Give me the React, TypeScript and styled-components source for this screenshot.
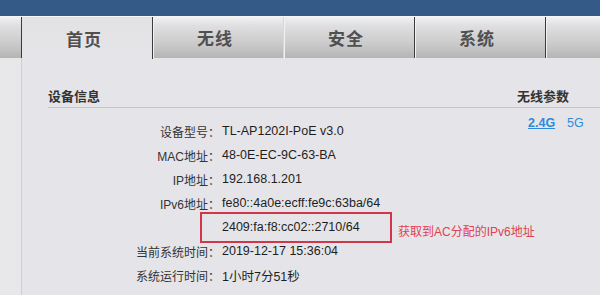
import styled, { createGlobalStyle, css } from 'styled-components';

const GlobalStyle = createGlobalStyle`
    html, body {
        margin: 0;
        padding: 0;
        background: #e5e5e9;
        font-family: "Liberation Sans", "Noto Sans CJK SC", sans-serif;
    }
`;

const Page = styled.div`
    width: 600px;
    height: 295px;
    overflow: hidden;
    background: #e5e5e9;
`;

const TopBar = styled.div`
    height: 16px;
    background: #345b88;
`;

const TabBar = styled.div`
    display: flex;
    height: 41px;
    background: linear-gradient(#eff1f3 0%, #e0e0e2 20%, #c8c8c8 70%, #b4b4b4 100%);
    border-top: 1px solid #f4f6f8;
`;

const TabLead = styled.div`
    width: 21px;
    flex: none;
    border-right: 1px solid #3a3a3a;
`;

const Tab = styled.div<{ active?: boolean; edge?: boolean }>`
    width: 131px;
    flex: none;
    display: flex;
    align-items: center;
    justify-content: center;
    padding-right: 6px;
    box-sizing: border-box;
    font-size: 17px;
    font-weight: bold;
    color: #505050;
    letter-spacing: 1px;
    border-right: 1px solid ${({ edge }) => (edge ? '#3a3a3a' : '#d6d6d6')};
    box-shadow: inset 1px 0 0 #f2f2f2;

    ${({ active }) => active && css`
        background: linear-gradient(#e2e2e4, #e5e5e9);
        height: 42px;
        box-shadow: none;
    `}
`;

const Main = styled.div`
    display: flex;
    height: 238px;
`;

const Gutter = styled.div`
    width: 21px;
    flex: none;
    background: #e8e8eb;
    border-right: 1px solid #cfcfd3;
`;

const Content = styled.div`
    display: flex;
    padding-left: 26px;
    flex: 1;
`;

const Section = styled.div<{ width?: number }>`
    position: relative;
    flex: ${({ width }) => (width ? 'none' : '1')};
    width: ${({ width }) => (width ? `${width}px` : 'auto')};
`;

const SectionTitle = styled.div<{ indent?: number }>`
    margin-top: 29px;
    height: 20px;
    line-height: 20px;
    padding-left: ${({ indent }) => indent ?? 0}px;
    font-size: 13px;
    font-weight: bold;
    color: #333;
    border-bottom: 1px solid #c4c4c8;
`;

const Rows = styled.div`
    margin-top: 11px;
`;

const Row = styled.div`
    position: relative;
    display: flex;
    height: 24px;
    align-items: center;
    font-size: 12px;
`;

const Label = styled.span`
    width: 172px;
    flex: none;
    text-align: right;
    color: #333;
`;

const Value = styled.span`
    padding-left: 2px;
    font-size: 12.5px;
    color: #1e1e1e;
`;

const Highlight = styled.div`
    position: absolute;
    left: 152px;
    top: -3px;
    width: 188px;
    height: 27px;
    border: 2px solid #d2364b;
`;

const Note = styled.span`
    position: absolute;
    left: 350px;
    top: 7px;
    font-size: 12px;
    color: #e04152;
    white-space: nowrap;
`;

const Bands = styled.div`
    display: flex;
    gap: 12px;
    margin-top: 8px;
    padding-left: 23px;
    font-size: 12.5px;
`;

const Band = styled.span<{ active?: boolean }>`
    color: #2f8ad8;
    font-weight: ${({ active }) => (active ? 'bold' : 'normal')};
    text-decoration: ${({ active }) => (active ? 'underline' : 'none')};
`;

const info = [
    { label: '设备型号：', value: 'TL-AP1202I-PoE v3.0' },
    { label: 'MAC地址：', value: '48-0E-EC-9C-63-BA' },
    { label: 'IP地址：', value: '192.168.1.201' },
    { label: 'IPv6地址：', value: 'fe80::4a0e:ecff:fe9c:63ba/64' },
    { label: '', value: '2409:fa:f8:cc02::2710/64', note: '获取到AC分配的IPv6地址' },
    { label: '当前系统时间：', value: '2019-12-17 15:36:04' },
    { label: '系统运行时间：', value: '1小时7分51秒' },
];

export default function App() {
    return (
        <Page>
            <GlobalStyle />
            <TopBar />
            <TabBar>
                <TabLead />
                <Tab active edge>首页</Tab>
                <Tab>无线</Tab>
                <Tab edge>安全</Tab>
                <Tab edge>系统</Tab>
                <Tab />
            </TabBar>
            <Main>
                <Gutter />
                <Content>
                    <Section width={457}>
                        <SectionTitle>设备信息</SectionTitle>
                        <Rows>
                            {info.map(item => (
                                <Row key={item.value}>
                                    <Label>{item.label}</Label>
                                    <Value>{item.value}</Value>
                                    {item.note && (
                                        <>
                                            <Highlight />
                                            <Note>{item.note}</Note>
                                        </>
                                    )}
                                </Row>
                            ))}
                        </Rows>
                    </Section>
                    <Section>
                        <SectionTitle indent={12}>无线参数</SectionTitle>
                        <Bands>
                            <Band active>2.4G</Band>
                            <Band>5G</Band>
                        </Bands>
                    </Section>
                </Content>
            </Main>
        </Page>
    );
}
